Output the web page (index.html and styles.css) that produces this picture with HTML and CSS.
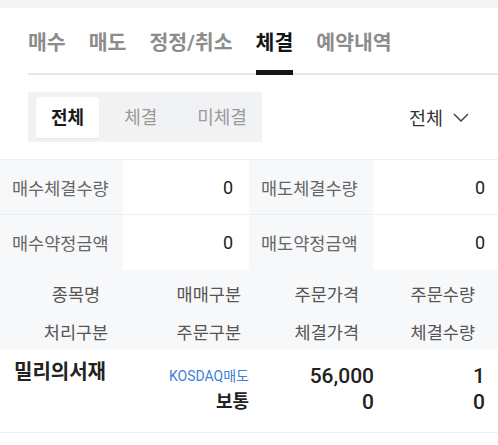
FILE: index.html
```html
<!DOCTYPE html>
<html lang="ko">
<head>
<meta charset="UTF-8">
<title>체결 내역</title>
<meta name="viewport" content="width=device-width, initial-scale=1.0">
<link rel="stylesheet" href="styles.css">
</head>
<body>
<div class="top-strip"></div>

<nav class="tabs">
<a class="tab">매수</a>
<a class="tab">매도</a>
<a class="tab">정정/취소</a>
<a class="tab active">체결</a>
<a class="tab">예약내역</a>
</nav>

<div class="filter-row">
<div class="segment">
<span class="seg active">전체</span>
<span class="seg">체결</span>
<span class="seg">미체결</span>
</div>
<span class="dropdown">전체
<svg width="16" height="9" viewBox="0 0 16 9"><path d="M1 1 L8 8 L15 1" fill="none" stroke="#444" stroke-width="1.5"/></svg>
</span>
</div>

<div class="summary">
<div class="sum-row">
<div class="sum-label">매수체결수량</div>
<div class="sum-value">0</div>
<div class="sum-label">매도체결수량</div>
<div class="sum-value">0</div>
</div>
<div class="sum-row">
<div class="sum-label">매수약정금액</div>
<div class="sum-value">0</div>
<div class="sum-label">매도약정금액</div>
<div class="sum-value">0</div>
</div>
</div>

<div class="list-head">
<div class="head-row">
<span class="first">종목명</span>
<span>매매구분</span>
<span>주문가격</span>
<span>주문수량</span>
</div>
<div class="head-row">
<span class="first">처리구분</span>
<span>주문구분</span>
<span>체결가격</span>
<span>체결수량</span>
</div>
</div>

<div class="list-row">
<div class="name">밀리의서재</div>
<div class="cell">
<span class="market">KOSDAQ매도</span>
<span class="strong">보통</span>
</div>
<div class="cell num">
<span>56,000</span>
<span>0</span>
</div>
<div class="cell num">
<span>1</span>
<span>0</span>
</div>
</div>
</body>
</html>
```

FILE: styles.css
```css
body {
    margin: 0;
    background: #fff;
    color: #222;
    font-family: Roboto, "Noto Sans CJK KR", sans-serif;
}
.top-strip {
    height: 8px;
    background: #f4f5f7;
}

/* tabs */
.tabs {
    display: flex;
    gap: 23px;
    margin-left: 28px;
    padding-top: 22px;
    border-bottom: 2px solid #e6e6e6;
}
.tab {
    position: relative;
    padding-bottom: 17px;
    font-size: 20.5px;
    line-height: 26px;
    font-weight: 700;
    color: #8c8c8c;
}
.tab.active {
    color: #151515;
}
.tab.active::after {
    content: "";
    position: absolute;
    left: 0;
    right: 0;
    bottom: -2px;
    height: 5px;
    background: #151515;
}

/* filter */
.filter-row {
    display: flex;
    justify-content: space-between;
    align-items: center;
    margin-top: 17px;
    padding: 0 29px 0 28px;
}
.segment {
    display: flex;
    gap: 10px;
    padding: 5px 0 4px 8px;
    background: #f1f2f4;
}
.seg {
    height: 41px;
    padding: 0 15px;
    font-size: 18px;
    line-height: 41px;
    color: #9a9a9a;
}
.seg.active {
    background: #fff;
    border-radius: 3px;
    box-shadow: 0 1px 2px rgba(0, 0, 0, 0.06);
    color: #1a1a1a;
    font-weight: 700;
}
.dropdown {
    display: flex;
    align-items: center;
    gap: 10px;
    font-size: 18.5px;
    color: #333;
}

/* summary */
.summary {
    margin-top: 17px;
    border-top: 1px solid #eeeff1;
}
.sum-row {
    display: grid;
    grid-template-columns: 123px 126px 124px 125px;
    height: 54px;
}
.sum-row + .sum-row {
    border-top: 1px solid #eeeff1;
    height: 55px;
}
.sum-label {
    display: flex;
    align-items: center;
    padding-left: 12px;
    background: #f7f8fa;
    font-size: 17.5px;
    color: #666;
}
.sum-value {
    display: flex;
    align-items: center;
    justify-content: flex-end;
    padding-right: 16px;
    font-size: 18px;
    color: #222;
}
.sum-value:last-child {
    padding-right: 13px;
}

/* list */
.list-head {
    padding: 4px 23px 0 0;
    background: #f7f8fa;
}
.head-row {
    display: grid;
    grid-template-columns: 152px 89px 118px 116px;
    height: 38px;
    align-items: center;
    font-size: 17.5px;
    color: #555;
}
.head-row span {
    text-align: right;
}
.head-row .first {
    text-align: center;
}
.list-row {
    display: grid;
    grid-template-columns: 110px 125px 125px 111px;
    padding: 13px 13px 17px 14px;
    border-bottom: 1px solid #eeeff1;
}
.name {
    font-size: 20px;
    line-height: 18px;
    font-weight: 700;
    color: #222;
}
.cell {
    display: flex;
    flex-direction: column;
    align-items: flex-end;
}
.cell span {
    height: 26px;
    line-height: 26px;
}
.market {
    font-size: 14px;
    color: #3f80d8;
}
.strong {
    font-size: 18px;
    font-weight: 700;
}
.num span {
    font-size: 21px;
    font-weight: 500;
}
```
